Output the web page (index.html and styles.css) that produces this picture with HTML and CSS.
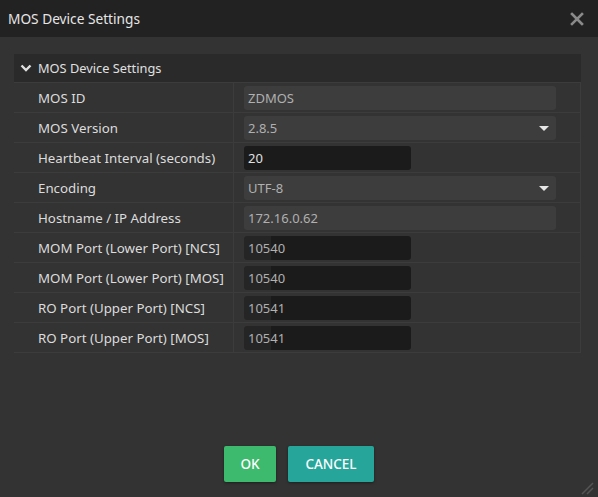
FILE: index.html
```html
<!DOCTYPE html>
<html lang="en">
<head>
    <meta charset="UTF-8">
    <title>MOS Device Settings</title>
    <link rel="stylesheet" href="styles.css">
</head>
<body>
    <div class="dialog">
        <div class="titlebar">
            <span class="title">MOS Device Settings</span>
            <svg class="close" width="14" height="14" viewBox="0 0 14 14">
                <path d="M2 2 L12 12 M12 2 L2 12" stroke="#8a8a8a" stroke-width="2.6" stroke-linecap="square"/>
            </svg>
        </div>

        <div class="content">
            <div class="section-head">
                <svg class="chevron" width="12" height="8" viewBox="0 0 12 8">
                    <path d="M1.5 1.5 L6 6 L10.5 1.5" stroke="#e0e0e0" stroke-width="2.4" fill="none"/>
                </svg>
                MOS Device Settings
            </div>

            <div class="row">
                <div class="label">MOS ID</div>
                <div class="value"><div class="field wide readonly">ZDMOS</div></div>
            </div>
            <div class="row">
                <div class="label">MOS Version</div>
                <div class="value"><div class="field wide select">2.8.5<span class="caret"></span></div></div>
            </div>
            <div class="row">
                <div class="label">Heartbeat Interval (seconds)</div>
                <div class="value"><div class="field short edit">20</div></div>
            </div>
            <div class="row">
                <div class="label">Encoding</div>
                <div class="value"><div class="field wide select">UTF-8<span class="caret"></span></div></div>
            </div>
            <div class="row">
                <div class="label">Hostname / IP Address</div>
                <div class="value"><div class="field wide readonly">172.16.0.62</div></div>
            </div>
            <div class="row">
                <div class="label">MOM Port (Lower Port) [NCS]</div>
                <div class="value"><div class="field short port">10540</div></div>
            </div>
            <div class="row">
                <div class="label">MOM Port (Lower Port) [MOS]</div>
                <div class="value"><div class="field short port">10540</div></div>
            </div>
            <div class="row">
                <div class="label">RO Port (Upper Port) [NCS]</div>
                <div class="value"><div class="field short port">10541</div></div>
            </div>
            <div class="row">
                <div class="label">RO Port (Upper Port) [MOS]</div>
                <div class="value"><div class="field short port">10541</div></div>
            </div>
        </div>

        <div class="footer">
            <button class="btn ok">OK</button>
            <button class="btn cancel">CANCEL</button>
        </div>

        <svg class="grip" width="14" height="14" viewBox="0 0 14 14">
            <path d="M2 13 L13 2 M7 13 L13 7" stroke="#555" stroke-width="1.5"/>
        </svg>
    </div>
</body>
</html>
```

FILE: styles.css
```css
body {
    margin: 0;
    background-color: #333333;
    font-family: "Noto Sans", "Open Sans", sans-serif;
    font-size: 13px;
    color: #dcdcdc;
}
.dialog {
    position: relative;
    display: flex;
    flex-direction: column;
    height: 100vh;
}
.titlebar {
    height: 37px;
    background-color: #222222;
    display: flex;
    align-items: center;
    justify-content: space-between;
    padding: 0 14px 0 8px;
}
.title {
    font-size: 13.7px;
    color: #e6e6e6;
}
.content {
    flex: 1;
    padding: 17px 17px 0 14px;
}
.section-head {
    height: 28px;
    background-color: #2a2a2a;
    border-bottom: 1px solid #3c3c3c;
    display: flex;
    align-items: center;
    padding-left: 6px;
    font-size: 12.8px;
    color: #e0e0e0;
}
.chevron {
    margin-right: 6px;
}
.row {
    display: flex;
    height: 29px;
    border-bottom: 1px solid #3c3c3c;
    border-right: 1px solid #3c3c3c;
}
.label {
    width: 195px;
    padding-left: 24px;
    border-right: 1px solid #3c3c3c;
    display: flex;
    align-items: center;
    white-space: nowrap;
    font-size: 13.3px;
}
.value {
    padding: 3px 0 0 10px;
}
.field {
    position: relative;
    height: 24px;
    line-height: 24px;
    border-radius: 3px;
    padding-left: 4px;
    box-sizing: border-box;
    color: #b0b0b0;
}
.wide {
    width: 312px;
    background-color: #3d3d3d;
}
.short {
    width: 167px;
    background-color: #1b1b1b;
}
.edit {
    color: #e0e0e0;
}
.port {
    background: linear-gradient(to right, #252525 27px, #1b1b1b 27px);
}
.caret {
    position: absolute;
    right: 7px;
    top: 10px;
    width: 0;
    height: 0;
    border-left: 5px solid transparent;
    border-right: 5px solid transparent;
    border-top: 5px solid #e6e6e6;
}
.footer {
    display: flex;
    justify-content: center;
    gap: 12px;
    padding-bottom: 15px;
}
.btn {
    height: 36px;
    border: none;
    border-radius: 2px;
    color: #ffffff;
    font-family: "Noto Sans", "Open Sans", sans-serif;
    font-size: 13.5px;
    font-weight: 500;
    box-shadow: 0 1px 3px rgba(0, 0, 0, 0.4);
}
.ok {
    width: 52px;
    background-color: #3dba6e;
}
.cancel {
    width: 86px;
    background-color: #26a69a;
}
.grip {
    position: absolute;
    right: 4px;
    bottom: 2px;
}
```
